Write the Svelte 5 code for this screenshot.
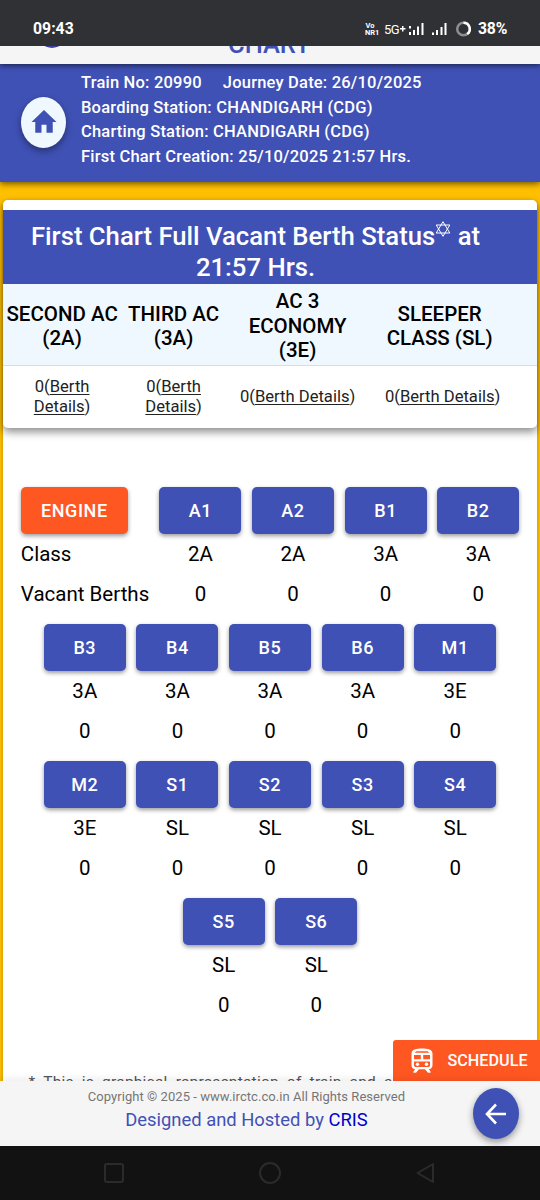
<script lang="ts">
    const classes = [
        { lines: ['SECOND AC', '(2A)'], wrap: true },
        { lines: ['THIRD AC', '(3A)'], wrap: true },
        { lines: ['AC 3', 'ECONOMY', '(3E)'], wrap: false },
        { lines: ['SLEEPER', 'CLASS (SL)'], wrap: false },
    ];

    const coachRows = [
        [['A1', '2A'], ['A2', '2A'], ['B1', '3A'], ['B2', '3A']],
        [['B3', '3A'], ['B4', '3A'], ['B5', '3A'], ['B6', '3A'], ['M1', '3E']],
        [['M2', '3E'], ['S1', 'SL'], ['S2', 'SL'], ['S3', 'SL'], ['S4', 'SL']],
        [['S5', 'SL'], ['S6', 'SL']],
    ];
</script>

<main>
    <div class="status-bar">
        <span class="clock">09:43</span>
        <svg class="status-icons" width="110" height="24" viewBox="0 0 110 24">
            <g fill="#fff">
                <text x="1.500" y="11" class="tiny">Vo</text>
                <text x="1" y="18" class="tiny">NR1</text>
                <text x="20" y="17" class="net">5G</text>
                <path d="M36 11h2V9h1.500v2h2v1.500h-2v2H38v-2h-2z" />
                <path d="M45 9h2v2.500h-2zM45 15h2v3h-2zM49 13h2v5h-2zM53 9.500h2V18h-2zM57.500 6h2v12h-2z" />
                <path d="M68 15.500h2V18h-2zM72 13h2v5h-2zM76.500 10h2v8h-2zM80.500 6h2v12h-2z" />
            </g>
            <circle cx="99.500" cy="12" r="6.300" fill="none" stroke="#8d8e90" stroke-width="2.500" />
            <path d="M99.500 5.700A6.300 6.300 0 0 1 103.200 17.100" fill="none" stroke="#fff" stroke-width="2.500" />
        </svg>
        <span class="battery">38%</span>
    </div>

    <div class="toolbar">
        <span class="logo"></span>
        <span class="toolbar-title">CHART</span>
    </div>

    <header>
        <button class="round home" aria-label="Home">
            <svg width="30" height="32" viewBox="0 0 24 24" preserveAspectRatio="none">
                <path d="M10 20v-6h4v6h5v-8h3L12 3 2 12h3v8z" fill="#3f51b5" />
            </svg>
        </button>
        <div class="journey">
            <div><span class="train">Train No: 20990</span><span>Journey Date: 26/10/2025</span></div>
            <div>Boarding Station: CHANDIGARH (CDG)</div>
            <div>Charting Station: CHANDIGARH (CDG)</div>
            <div>First Chart Creation: 25/10/2025 21:57 Hrs.</div>
        </div>
    </header>

    <div class="content">
        <div class="page">
            <section class="card">
                <h1>
                    <span>First Chart Full Vacant Berth Status<svg class="star" width="16" height="16" viewBox="0 0 16 16"><path d="M8 .7L14.800 12H1.200zM8 15.300L1.200 4h13.600z" fill="none" stroke="#fff" /></svg> at</span>
                    <span>21:57 Hrs.</span>
                </h1>
                <div class="grid head">
                    {#each classes as c}
                        <div>
                            {#each c.lines as line}<span>{line}</span>{/each}
                        </div>
                    {/each}
                </div>
                <div class="grid details">
                    {#each classes as c}
                        <div class:wrap={c.wrap}>0(<u>Berth Details</u>)</div>
                    {/each}
                </div>
            </section>

            <section class="coaches">
                {#each coachRows as row, i}
                    <div class="coach-row">
                        {#if i === 0}
                            <div class="coach legend">
                                <button class="engine">ENGINE</button>
                                <span>Class</span>
                                <span>Vacant Berths</span>
                            </div>
                        {/if}
                        {#each row as [name, type]}
                            <div class="coach">
                                <button>{name}</button>
                                <span>{type}</span>
                                <span>0</span>
                            </div>
                        {/each}
                    </div>
                {/each}
            </section>

            <p class="note">* This is graphical representation of train and actual</p>
        </div>

        <button class="schedule">
            <svg width="22" height="26" viewBox="0 0 22 26">
                <path
                    fill="#fff"
                    fill-rule="evenodd"
                    d="M11 .5C5.500.5.500 1.200.500 5.800v11.400c0 2.200 1.600 4 3.700 4L2.400 23.500v1.300H5l3-3.600h6l3 3.600h2.600v-1.300l-1.800-2.300c2.100 0 3.700-1.800 3.700-4V5.800C21.500 1.200 16.500.5 11 .5zM5.500 3.300h11l2 1.500h-15zM3 7h6.800v4.200H3zM12.200 7H19v4.200h-6.800zM3 13.500h16v3.700c0 1-.7 1.700-1.600 1.700H4.600c-.9 0-1.600-.7-1.600-1.700z"
                />
                <circle cx="6.500" cy="16.200" r="1.700" fill="#fff" />
                <circle cx="15.500" cy="16.200" r="1.700" fill="#fff" />
            </svg>
            <span>SCHEDULE</span>
        </button>
    </div>

    <footer>
        <div class="copyright">Copyright © 2025 - www.irctc.co.in All Rights Reserved</div>
        <div class="hosted">Designed and Hosted by <span>CRIS</span></div>
        <button class="round back" aria-label="Back">
            <svg width="22" height="22" viewBox="0 0 22 22">
                <path d="M21 11H2.500M11 1.500L2 11l9 9.500" fill="none" stroke="#fff" stroke-width="2.600" />
            </svg>
        </button>
    </footer>

    <nav>
        <svg width="540" height="54" viewBox="0 0 540 54" fill="none" stroke="#2b2b2b" stroke-width="2">
            <rect x="105" y="18" width="18" height="18" rx="2" />
            <circle cx="270" cy="27" r="10" />
            <path d="M433 18v18l-15.500-9z" stroke-linejoin="round" />
        </svg>
    </nav>
</main>

<style>
    :global(body) {
        margin: 0;
    }

    main {
        display: flex;
        flex-direction: column;
        width: 540px;
        height: 1200px;
        overflow: hidden;
        font-family: Roboto, sans-serif;
        background: #ffc107;
    }

    button {
        padding: 0;
        border: none;
        font-family: inherit;
        font-weight: 500;
        color: #fff;
    }

    .status-bar {
        display: flex;
        align-items: center;
        box-sizing: border-box;
        height: 46px;
        padding: 11px 31px 0 33px;
        background: #303134;
        color: #fff;
        font-size: 15.800px;
        font-weight: 700;
        flex: none;
        z-index: 3;
    }

    .status-icons {
        margin-left: auto;
        margin-right: 4px;
    }

    .tiny {
        font-size: 7.500px;
    }

    .net {
        font-size: 13px;
        font-weight: 400;
        letter-spacing: -0.500px;
    }

    .battery {
        width: 31px;
        letter-spacing: -0.2px;
    }

    .toolbar {
        display: flex;
        align-items: flex-end;
        box-sizing: border-box;
        height: 17.500px;
        flex: none;
        padding: 0 0 9px 37px;
        background: #f5f5f5;
        box-shadow: 0 2px 5px rgba(0, 0, 0, 0.5);
        color: #3f51b5;
        z-index: 2;
    }

    .logo {
        width: 30px;
        height: 30px;
        margin-bottom: 6.500px;
        border-radius: 50%;
        background: #3f3fa5;
        flex: none;
    }

    .toolbar-title {
        margin-left: 161px;
        font-size: 25.500px;
        line-height: 28px;
        font-weight: 500;
        margin-bottom: -3.500px;
    }

    header {
        display: flex;
        box-sizing: border-box;
        height: 118.500px;
        flex: none;
        padding: 7.900px 20px 8px 21px;
        background: #3f51b5;
        color: #fff;
        box-shadow: 0 2px 6px rgba(0, 0, 0, 0.55);
        z-index: 1;
    }

    .round {
        display: flex;
        align-items: center;
        justify-content: center;
        border-radius: 50%;
        box-shadow: 0 3px 7px rgba(0, 0, 0, 0.4);
    }

    .home {
        width: 45px;
        height: 51px;
        margin: 25.500px 15px 0 0;
        background: #f0f8ff;
    }

    .journey {
        font-size: 16.500px;
        line-height: 24.400px;
        font-weight: 500;
        letter-spacing: 0.2px;
        white-space: nowrap;
    }

    .train {
        margin-right: 21px;
    }

    .content {
        position: relative;
        height: 899px;
        flex: none;
        overflow: hidden;
        padding: 18px 2.600px 0;
        box-sizing: border-box;
        background: #ffc000;
    }

    .page {
        height: 900px;
        background: #fff;
        border-radius: 5px 5px 0 0;
        box-shadow: 0 2px 4px rgba(0, 0, 0, 0.3);
    }

    .card {
        height: 228px;
        background: #fff;
        border-radius: 5px;
        box-shadow: 0 4px 8px rgba(0, 0, 0, 0.45);
        padding-top: 10px;
        box-sizing: border-box;
    }

    h1 {
        display: flex;
        flex-direction: column;
        align-items: center;
        box-sizing: border-box;
        height: 74px;
        margin: 0;
        padding: 11px 29px 0 0;
        background: #3f51b5;
        color: #fff;
        font-size: 25.700px;
        line-height: 30.500px;
        font-weight: 500;
        white-space: nowrap;
    }

    .star {
        vertical-align: 8px;
    }

    .grid {
        display: grid;
        grid-template-columns: 119px 104px 144px 146px;
        align-items: center;
        text-align: center;
    }

    .head {
        height: 82px;
        box-sizing: border-box;
        padding-top: 3px;
        background: #f0f8ff;
        border-bottom: 1px solid #ddd;
        font-size: 20.500px;
        line-height: 24.500px;
        font-weight: 500;
        white-space: nowrap;
    }

    .head div:last-child {
        padding-right: 6px;
    }

    .head span {
        display: block;
    }

    .details {
        height: 62px;
        color: #222;
        font-size: 16.600px;
        line-height: 20px;
    }

    .details .wrap {
        padding: 0 22px;
    }

    u {
        text-underline-offset: 2px;
        text-decoration-thickness: 1px;
    }

    .coaches {
        display: flex;
        flex-direction: column;
        gap: 10px;
        padding-top: 59.400px;
    }

    .coach-row {
        display: flex;
        justify-content: center;
        gap: 10.600px;
        height: 126.900px;
    }

    .coach {
        display: flex;
        flex-direction: column;
        align-items: center;
        width: 82px;
        font-size: 20.500px;
        white-space: nowrap;
    }

    .coach button {
        width: 82px;
        height: 46.500px;
        flex: none;
        margin-bottom: 1.200px;
        border-radius: 5px;
        background: #3f51b5;
        font-size: 18px;
        letter-spacing: 0.600px;
        box-shadow: 0 2px 4px rgba(0, 0, 0, 0.4);
    }

    .coach span {
        line-height: 39.900px;
    }

    .legend {
        width: 128px;
        align-items: flex-start;
    }

    .coach .engine {
        width: 107px;
        background: #ff5722;
    }

    .note {
        margin: 45px 20px 0 26px;
        font-size: 15.500px;
        line-height: 24px;
        color: #555;
        word-spacing: 4px;
        letter-spacing: 0.230px;
        white-space: nowrap;
    }

    .schedule {
        position: absolute;
        right: 0;
        bottom: 0;
        display: flex;
        align-items: center;
        width: 147px;
        height: 41px;
        padding-left: 18px;
        gap: 14.500px;
        border-radius: 3px 0 0 0;
        background: #ff5722;
        font-size: 16.200px;
    }

    footer {
        position: relative;
        height: 65px;
        flex: none;
        background: #f5f5f5;
        box-shadow: 0 -2px 8px rgba(0, 0, 0, 0.08);
        text-align: center;
        white-space: nowrap;
    }

    .copyright {
        padding: 6px 47px 0 0;
        color: #757575;
        font-size: 13px;
        line-height: 20px;
        letter-spacing: 0.050px;
    }

    .hosted {
        padding: 2px 47px 0 0;
        color: #3f51b5;
        font-size: 18.400px;
        line-height: 22px;
    }

    .hosted span {
        color: #0000cd;
    }

    .back {
        position: absolute;
        right: 21px;
        top: 7px;
        width: 46px;
        height: 51px;
        background: #3f51b5;
    }

    nav {
        height: 54px;
        flex: none;
        background: #121212;
        z-index: 2;
    }
</style>
